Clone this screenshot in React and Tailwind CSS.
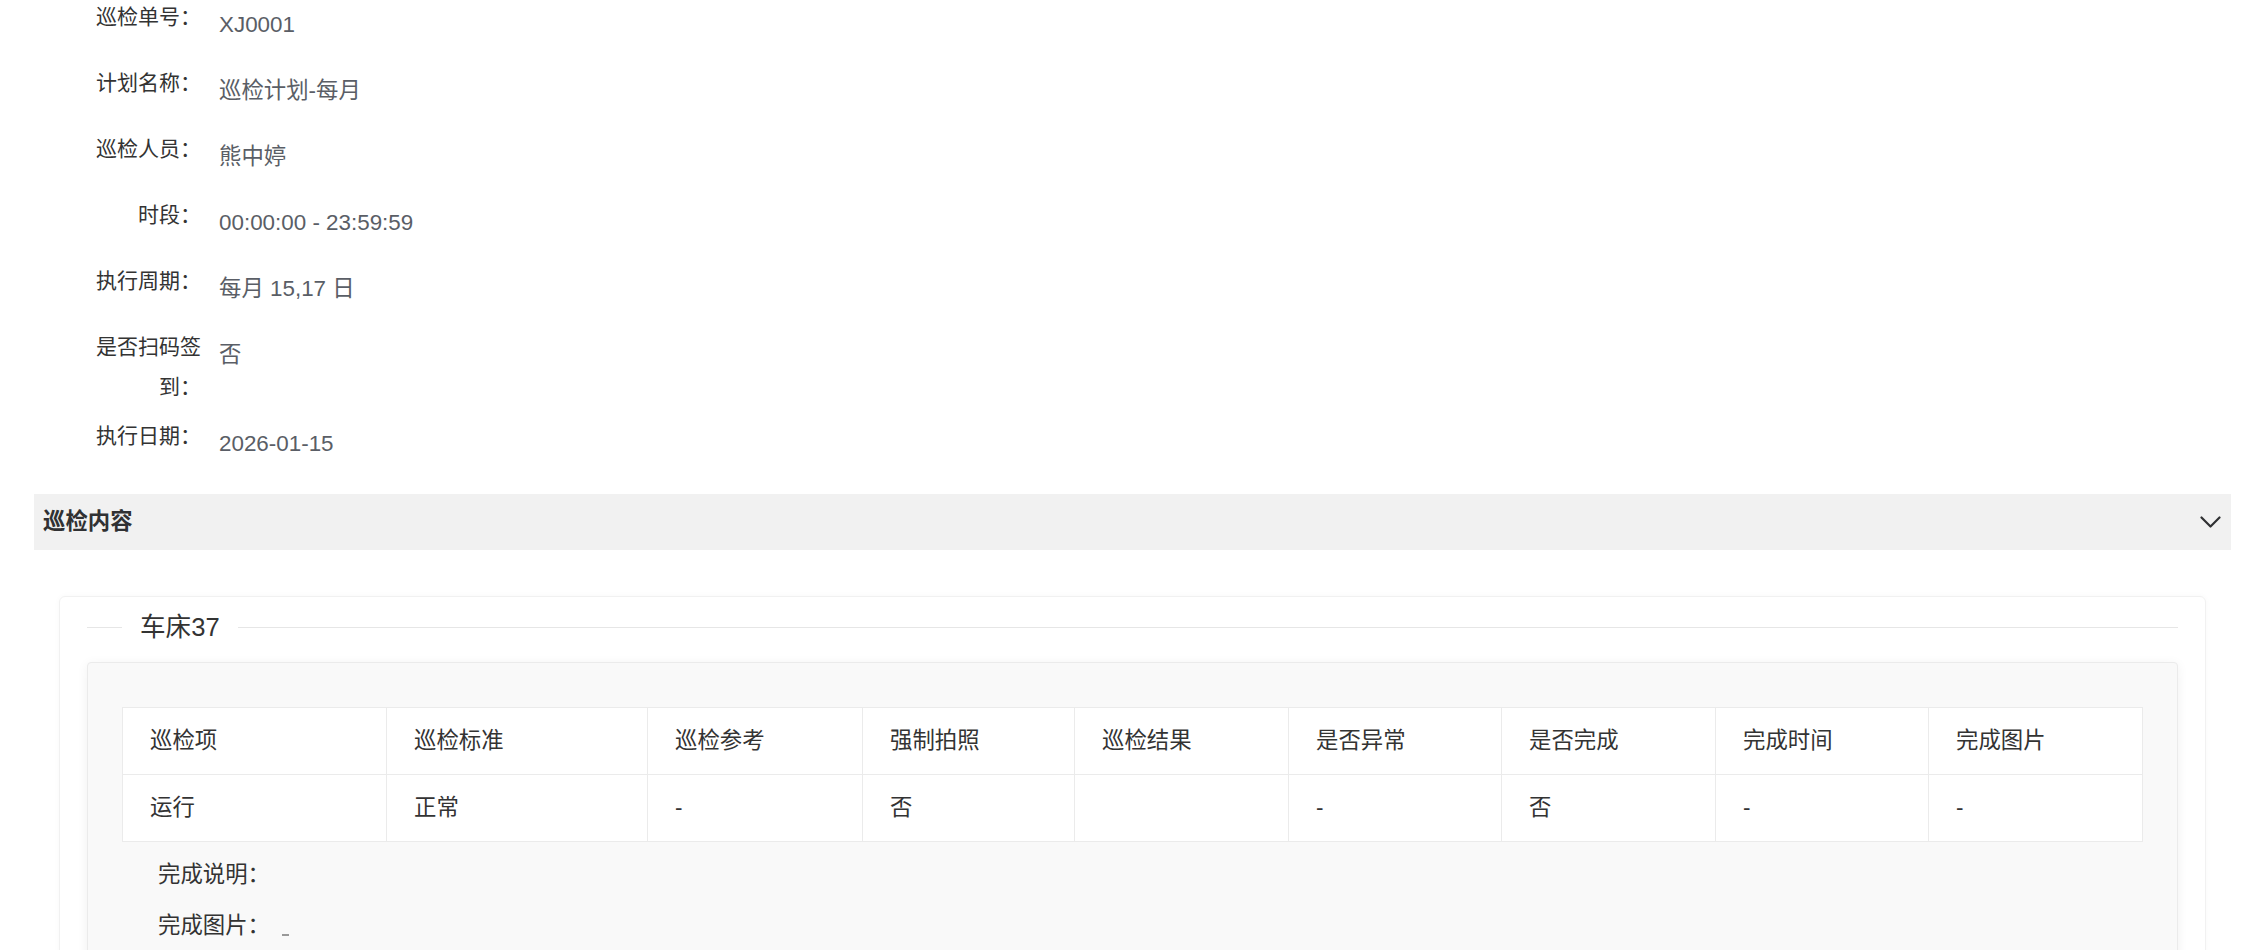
import React from 'react';

// detail rows at the top of the page
const fields = [
  { label: '巡检单号：', value: 'XJ0001' },
  { label: '计划名称：', value: '巡检计划-每月' },
  { label: '巡检人员：', value: '熊中婷' },
  { label: '时段：', value: '00:00:00 - 23:59:59' },
  { label: '执行周期：', value: '每月 15,17 日' },
  { label: '是否扫码签到：', value: '否' },
  { label: '执行日期：', value: '2026-01-15' },
];

const columns = [
  { title: '巡检项', width: 264 },
  { title: '巡检标准', width: 261 },
  { title: '巡检参考', width: 215 },
  { title: '强制拍照', width: 212 },
  { title: '巡检结果', width: 214 },
  { title: '是否异常', width: 213 },
  { title: '是否完成', width: 214 },
  { title: '完成时间', width: 213 },
  { title: '完成图片', width: 214 },
];

const rows = [['运行', '正常', '-', '否', '', '-', '否', '-', '-']];

const ChevronDown = () => (
  <svg width="21" height="12" viewBox="0 0 21 12" fill="none">
    <polyline points="1.5,1.5 10.5,10.5 19.5,1.5" stroke="#303133" strokeWidth="2.2" strokeLinecap="round" strokeLinejoin="round" />
  </svg>
);

const FieldRow = ({ label, value }) => (
  <div className="flex items-start mb-[9px]">
    <div className="w-[153px] shrink-0 pr-[18px] text-right leading-[40px] text-[#333]">{label}</div>
    <div className="pt-[8px] pb-[9px] leading-[40px] text-[22.4px] text-[#5a5e66]">{value}</div>
  </div>
);

export default function App() {
  return (
    <div className="min-h-[950px] bg-white font-['Liberation_Sans','Noto_Sans_CJK_SC',sans-serif] text-[21px] overflow-hidden">
      <div className="pl-[34px] pr-[35px]">
        {/* === BASIC INFO === */}
        <div className="-mt-[3px] pl-[32px]">
          {fields.map((f) => (
            <FieldRow key={f.label} label={f.label} value={f.value} />
          ))}
        </div>

        {/* === SECTION HEADER === */}
        <div className="mt-[21px] h-[56px] bg-[#f1f1f1] flex items-center justify-between pl-[9px] pr-[10px]">
          <span className="font-bold text-[#303133] text-[22.4px]">巡检内容</span>
          <ChevronDown />
        </div>

        {/* === CARD === */}
        <div className="mt-[46px] ml-[25px] mr-[25px] rounded-[6px] border border-[#f1f1f1] shadow-[0_0_6px_rgba(0,0,0,0.03)] px-[27px] pt-[10px] pb-[40px]">
          <div className="flex items-center h-[40px]">
            <div className="w-[35px] h-px bg-[#e6e6e6]" />
            <span className="px-[18px] text-[25.6px] text-[#333] leading-[40px]">车床37</span>
            <div className="flex-1 h-px bg-[#e6e6e6]" />
          </div>

          <div className="mt-[15px] rounded-[4px] border border-[#ebebeb] bg-[#f9f9f9] shadow-[0_2px_12px_0_rgba(0,0,0,0.06)] pl-[34px] pr-[35px] pt-[44px] pb-[60px]">
            <table className="table-fixed border-collapse bg-white w-[2020px] text-[22.4px]">
              <colgroup>
                {columns.map((c) => (
                  <col key={c.title} style={{ width: c.width }} />
                ))}
              </colgroup>
              <thead>
                <tr>
                  {columns.map((c) => (
                    <th key={c.title} className="h-[67px] border border-[#ebebeb] px-[27px] text-left font-normal text-[#333]">
                      {c.title}
                    </th>
                  ))}
                </tr>
              </thead>
              <tbody>
                {rows.map((r, i) => (
                  <tr key={i}>
                    {r.map((cell, j) => (
                      <td key={j} className="h-[67px] border border-[#ebebeb] px-[27px] text-[#333]">
                        {cell}
                      </td>
                    ))}
                  </tr>
                ))}
              </tbody>
            </table>

            <div className="pl-[36px] pt-[7px] text-[22.4px] text-[#333]">
              <div className="leading-[51px]">完成说明：</div>
              <div className="leading-[51px] flex items-center">
                <span>完成图片：</span>
                <span className="ml-[12px] mt-[18px] inline-block w-[7px] h-[2px] bg-[#999]" />
              </div>
            </div>
          </div>
        </div>
      </div>
    </div>
  );
}
